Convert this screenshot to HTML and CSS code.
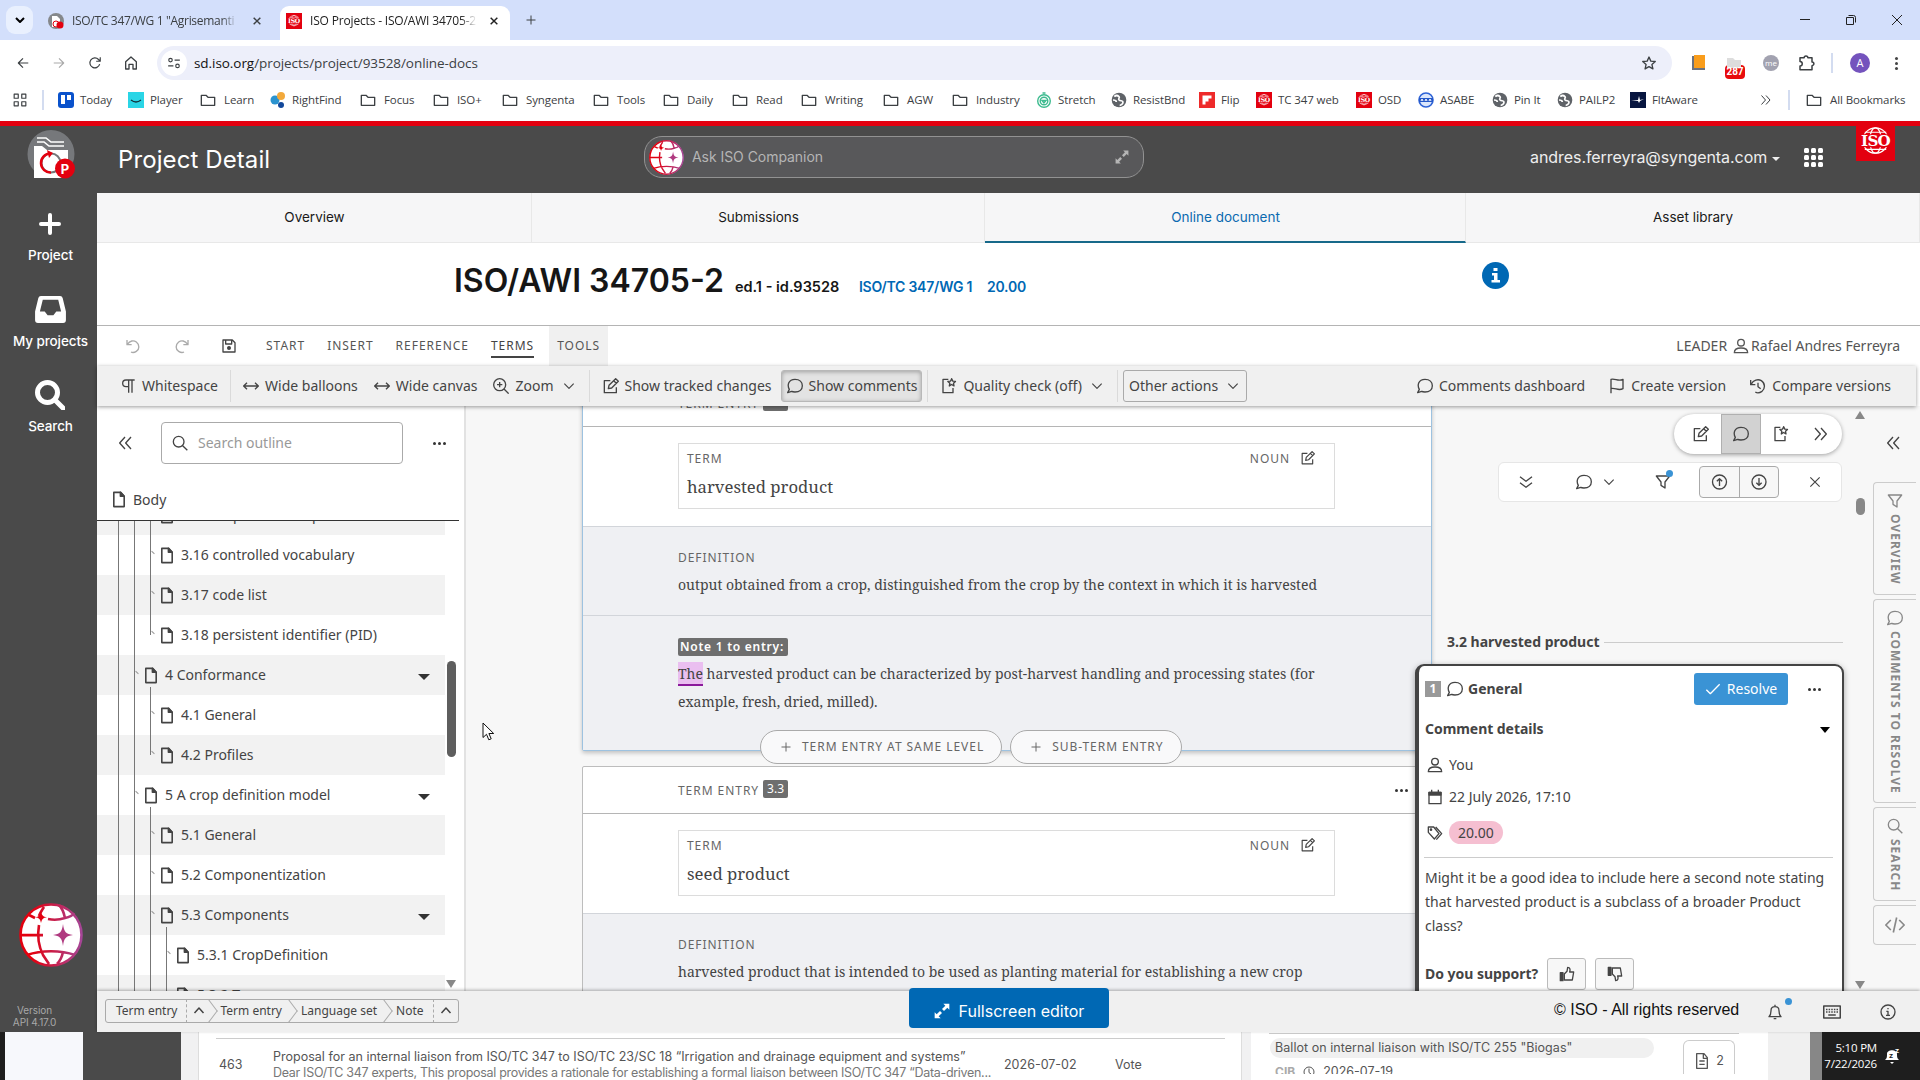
FILE: index.html
```html
<!DOCTYPE html>
<html lang="en">
<head>
  <meta charset="UTF-8" />
  <meta name="viewport" content="width=device-width, initial-scale=1.0"/>
  <title>ISO Projects - ISO/AWI 34705-2</title>
  <link rel="stylesheet" href="styles.css">
</head>
<body>

  <!-- Icon sprite -->
  <svg class="sprite" width="0" height="0">
    <defs>
      <linearGradient id="brand" x1="0" y1="0" x2="64" y2="0" gradientUnits="userSpaceOnUse">
        <stop offset="0.2" stop-color="#e3000f"/>
        <stop offset="1" stop-color="#a3479a"/>
      </linearGradient>
    </defs>
    <symbol id="i-down" viewBox="0 0 24 24"><path d="M4 8l8 8 8-8"/></symbol>
    <symbol id="i-up" viewBox="0 0 24 24"><path d="M3 16l9-10 9 10"/></symbol>
    <symbol id="i-x" viewBox="0 0 24 24"><path d="M4 4l16 16M20 4L4 20"/></symbol>
    <symbol id="i-plus" viewBox="0 0 24 24"><path d="M12 3v18M3 12h18"/></symbol>
    <symbol id="i-back" viewBox="0 0 24 24"><path d="M21 12H4M12 4l-8 8 8 8"/></symbol>
    <symbol id="i-forward" viewBox="0 0 24 24"><path d="M3 12h17M12 4l8 8-8 8"/></symbol>
    <symbol id="i-reload" viewBox="0 0 24 24"><path d="M20 14a8.500 8.500 0 1 1-2-8l3 3M21 2v7h-7"/></symbol>
    <symbol id="i-home" viewBox="0 0 24 24"><path d="M4 10l8-7 8 7v11h-5v-7H9v7H4z"/></symbol>
    <symbol id="i-tune" viewBox="0 0 24 24"><circle cx="6" cy="7" r="3"/><circle cx="18" cy="17" r="3"/><path d="M13 7h9M2 17h9"/></symbol>
    <symbol id="i-star" viewBox="0 0 24 24"><path d="M12 3l2.700 6.200 6.700.6-5 4.500 1.500 6.600L12 17.400 6.100 20.900l1.500-6.600-5-4.500 6.700-.6z"/></symbol>
    <symbol id="i-puzzle" viewBox="0 0 24 24"><path d="M4 5h5.500a2.500 2.500 0 0 1 5 0H20v5.500a2.500 2.500 0 0 1 0 5V21H4v-5a3 3 0 0 0 0-6z"/></symbol>
    <symbol id="i-folder" viewBox="0 0 24 24"><path d="M2 19V5h7l3 3h10v12H2z"/></symbol>
    <symbol id="i-apps" viewBox="0 0 24 24"><path d="M2 2h7v7H2zM15 2h7v7h-7zM2 15h7v7H2zM15 15h7v7h-7z"/></symbol>
    <symbol id="i-world" viewBox="0 0 24 24"><circle cx="12" cy="12" r="11" fill="#5f6368" stroke="none"/><path d="M5 7c3-3 5-2 7 0s-2 3 0 5 6 0 6 3-3 5-5 5M3 12c3 0 5 1 5 3" fill="none" stroke="#fff" stroke-width="2.500"/></symbol>
    <symbol id="i-iso" viewBox="0 0 40 40"><path d="M0 0h40v40H0z" fill="#e3000f" stroke="none"/><g fill="none" stroke="#fff" stroke-width="1.200"><circle cx="20" cy="19" r="13"/><ellipse cx="20" cy="19" rx="6" ry="13"/><path d="M9 10.500h22M9 28h22"/></g><path d="M3 12.500h34v13.500H3z" fill="#e3000f" stroke="none"/><text x="20" y="25" text-anchor="middle" class="iso-word">ISO</text></symbol>
    <symbol id="i-undo" viewBox="0 0 24 24"><path d="M3 3v7h7M4 9c3-5 9-6 13-3 5 4 5 11 0 14-3 2-6 2-8 1"/></symbol>
    <symbol id="i-redo" viewBox="0 0 24 24"><path d="M21 3v7h-7M20 9C17 4 11 3 7 6c-5 4-5 11 0 14 3 2 6 2 8 1"/></symbol>
    <symbol id="i-save" viewBox="0 0 24 24"><path d="M3 3h14l4 4v14H3zM7 3v6h9V3"/><circle cx="12" cy="15" r="2" fill="currentColor"/></symbol>
    <symbol id="i-user" viewBox="0 0 24 24"><circle cx="12" cy="7" r="5"/><path d="M2 22c0-5 3-7 10-7s10 2 10 7z"/></symbol>
    <symbol id="i-pilcrow" viewBox="0 0 24 24"><path d="M22 3H9a5 5 0 0 0 0 10h4M13 3v19M18 3v19"/></symbol>
    <symbol id="i-wide" viewBox="0 0 24 24"><path d="M1 12h22M6 7l-5 5 5 5M18 7l5 5-5 5"/></symbol>
    <symbol id="i-zoom" viewBox="0 0 24 24"><circle cx="10" cy="10" r="9"/><path d="M16.500 16.500l7 7M10 6v8M6 10h8"/></symbol>
    <symbol id="i-search" viewBox="0 0 24 24"><circle cx="10" cy="10" r="8"/><path d="M16 16l7 7"/></symbol>
    <symbol id="i-edit" viewBox="0 0 24 24"><path d="M11 4H2v18h18v-8M8 16l1-5 10-10 4 4-10 10zM16 4l4 4"/></symbol>
    <symbol id="i-comment" viewBox="0 0 24 24"><path d="M1 22l2.500-5C0 11 2 2 12 2c7 0 11 4 11 9.500S19 21 12 21c-2 0-4 0-5-1z"/></symbol>
    <symbol id="i-quality" viewBox="0 0 24 24"><path d="M11 2H3v20h15v-7M16 1l1.700 3.700 4 .4-3 2.700.8 4.100-3.500-2.200-3.500 2.200.8-4.100-3-2.700 4-.4z"/></symbol>
    <symbol id="i-flag" viewBox="0 0 24 24"><path d="M3 23V2c6-2 11 4 18 0v14c-7 4-12-2-18 0"/></symbol>
    <symbol id="i-history" viewBox="0 0 24 24"><path d="M1 3v7h7M2 9C5 3 12 1 17 4c6 4 6 12 1 16-3 2-7 3-10 1M12 7v6l4 3"/></symbol>
    <symbol id="i-left2" viewBox="0 0 24 24"><path d="M12 3l-8 9 8 9M21 3l-8 9 8 9"/></symbol>
    <symbol id="i-right2" viewBox="0 0 24 24"><path d="M3 3l8 9-8 9M12 3l8 9-8 9"/></symbol>
    <symbol id="i-down2" viewBox="0 0 24 24"><path d="M3 4l9 7 9-7M3 13l9 7 9-7"/></symbol>
    <symbol id="i-doc" viewBox="0 0 14 18"><path d="M1.500 1.500h7.500l3.500 4v11h-11z"/><path d="M8.500 1.500v4h4z" fill="currentColor"/></symbol>
    <symbol id="i-filter" viewBox="0 0 24 24"><path d="M2 3h20l-7 9v9l-6-4v-5z"/></symbol>
    <symbol id="i-cup" viewBox="0 0 24 24"><circle cx="12" cy="12" r="10.500"/><path d="M12 18V7M8 11l4-4 4 4"/></symbol>
    <symbol id="i-cdown" viewBox="0 0 24 24"><circle cx="12" cy="12" r="10.500"/><path d="M12 6v11M8 13l4 4 4-4"/></symbol>
    <symbol id="i-check" viewBox="0 0 24 24"><path d="M2 13l6 6L22 5"/></symbol>
    <symbol id="i-cal" viewBox="0 0 24 24"><path d="M3 5h18v17H3zM7 1v4M17 1v4"/><path d="M3 5h18v4H3z" fill="currentColor"/></symbol>
    <symbol id="i-tag" viewBox="0 0 24 24"><path d="M2 3h8l8 10-7 8-9-10zM13 3l9 10-8 9"/><circle cx="6" cy="7" r="1"/></symbol>
    <symbol id="i-thumb" viewBox="0 0 24 24"><path d="M2 10h4v12H2z" fill="currentColor"/><path d="M8 12l4-4 1-6c4 0 4 4 3 7h6l-2 12H8z"/></symbol>
    <symbol id="i-code" viewBox="0 0 24 24"><path d="M7 6l-6 6 6 6M17 6l6 6-6 6M14 3l-4 18"/></symbol>
    <symbol id="i-bell" viewBox="0 0 24 24"><path d="M3 19c3-3 3-5 3-9 0-8 12-8 12 0 0 4 0 6 3 9zM12 4V1M10 22h4"/></symbol>
    <symbol id="i-keys" viewBox="0 0 24 24"><path d="M1 4h22v16H1zM7 16h10"/><path d="M4 8.500h16M4 12h16" stroke-dasharray="2 1.500"/></symbol>
    <symbol id="i-info" viewBox="0 0 24 24"><circle cx="12" cy="12" r="10.500"/><path d="M9.500 11H12v6M9 17h6M12 6v2"/></symbol>
    <symbol id="i-expand" viewBox="0 0 24 24"><path d="M14 1h9v9l-3-3-5 5-3-3 5-5zM10 23H1v-9l3 3 5-5 3 3-5 5z" fill="currentColor" stroke="none"/></symbol>
    <symbol id="i-page" viewBox="0 0 24 24"><path d="M4 1h11l5 6v16H4zM8 12h8M8 17h8M14 1v7h6"/></symbol>
    <symbol id="i-clock" viewBox="0 0 24 24"><circle cx="12" cy="12" r="10"/><path d="M12 5v8l4 3"/></symbol>
    <symbol id="i-globe" viewBox="0 0 64 64">
      <circle cx="32" cy="32" r="31" fill="#fff"/>
      <g fill="none" stroke="url(#brand)" stroke-width="2.600">
        <circle cx="32" cy="32" r="30.500"/>
        <path d="M1 32.100h23M20 22c-2 12-1 20 4 30l6 9M25 4c-2 3-4 6-5 9M40 2c4 4 5 8 6 13-6 2-12 2-17 1M46 15c5-1 8-3 9-5M8 52c14-5 34-5 48 0M44 49c-1 5-3 9-6 12M10 12l6 3"/>
      </g>
      <path d="M44 21c1 8 3 10 10 11-7 1-9 3-10 11-1-8-3-10-10-11 7-1 9-3 10-11z" fill="#b03a80"/>
      <path d="M22 8c.7 4 2 6 6 6-4 1-5 2-6 6-.7-4-2-5-6-6 4 0 5-2 6-6z" fill="#e3000f"/>
    </symbol>
  </svg>

  <!-- Browser chrome -->
  <div class="tabstrip">
    <button class="tab-search"><svg class="ic w12 bold"><use href="#i-down"/></svg></button>
    <div class="btab">
      <svg class="fav" viewBox="0 0 16 16"><circle cx="8" cy="8" r="8" fill="#85888b"/><path d="M4 3h5l3 3v8H4z" fill="#fff"/><circle cx="12" cy="12" r="3.500" fill="#e3000f"/><circle cx="8" cy="11" r="3" fill="none" stroke="#e3000f"/></svg>
      <span class="btab-title">ISO/TC 347/WG 1 "Agrisemanti</span>
      <svg class="ic w10"><use href="#i-x"/></svg>
    </div>
    <div class="btab on">
      <svg class="fav"><use href="#i-iso"/></svg>
      <span class="btab-title">ISO Projects - ISO/AWI 34705-2</span>
      <svg class="ic w10"><use href="#i-x"/></svg>
    </div>
    <svg class="ic w12 newtab"><use href="#i-plus"/></svg>
    <div class="win-btns">
      <svg viewBox="0 0 12 12"><path d="M1 5.500h10"/></svg>
      <svg viewBox="0 0 12 12"><path d="M1.500 3.500h7v7h-7zM3.500 1.500h5q2 0 2 2v5"/></svg>
      <svg viewBox="0 0 12 12"><path d="M1 1l10 10M11 1L1 11"/></svg>
    </div>
  </div>

  <div class="navbar">
    <svg class="ic w14"><use href="#i-back"/></svg>
    <svg class="ic w14 faded"><use href="#i-forward"/></svg>
    <svg class="ic w14"><use href="#i-reload"/></svg>
    <svg class="ic w16"><use href="#i-home"/></svg>
    <div class="urlbar">
      <span class="tune"><svg class="ic w14"><use href="#i-tune"/></svg></span>
      <span class="url"><b>sd.iso.org</b>/projects/project/93528/online-docs</span>
      <svg class="ic w16"><use href="#i-star"/></svg>
    </div>
    <div class="exts">
      <svg class="w16" viewBox="0 0 16 16"><path d="M1 1h13v14H1z" fill="#6b7280"/><path d="M3 0h11v13H3z" fill="#f99d1c"/></svg>
      <span class="ext-count"><svg class="w16" viewBox="0 0 16 16"><path d="M1 1h6l2 2h6v8H1z" fill="#ddd"/></svg><span class="ext-badge">287</span></span>
      <span class="ext-me">me</span>
      <svg class="ic w18"><use href="#i-puzzle"/></svg>
      <i class="vline"></i>
      <span class="profile">A</span>
      <span class="kebab"></span>
    </div>
  </div>

  <div class="bookmarks">
    <svg class="ic w14"><use href="#i-apps"/></svg>
    <i class="vline"></i>
    <a><svg class="fav" viewBox="0 0 16 16"><rect width="16" height="16" rx="3" fill="#0a52cc"/><path d="M3 3h4v9H3zM9 3h4v5H9z" fill="#fff"/></svg>Today</a>
    <a><svg class="fav" viewBox="0 0 16 16"><path d="M0 0h16v16H0z" fill="#2ad5e6"/><path d="M3 8q5 4 10 0" fill="none" stroke="#10323c" stroke-width="1.300"/></svg>Player</a>
    <a><svg class="ic w16"><use href="#i-folder"/></svg>Learn</a>
    <a><svg class="fav" viewBox="0 0 16 16"><circle cx="5" cy="8" r="4.500" fill="#2a93cf"/><circle cx="11" cy="4" r="4" fill="#f2a93b"/><circle cx="11" cy="13" r="3" fill="#12489b"/></svg>RightFind</a>
    <a><svg class="ic w16"><use href="#i-folder"/></svg>Focus</a>
    <a><svg class="ic w16"><use href="#i-folder"/></svg>ISO+</a>
    <a><svg class="ic w16"><use href="#i-folder"/></svg>Syngenta</a>
    <a><svg class="ic w16"><use href="#i-folder"/></svg>Tools</a>
    <a><svg class="ic w16"><use href="#i-folder"/></svg>Daily</a>
    <a><svg class="ic w16"><use href="#i-folder"/></svg>Read</a>
    <a><svg class="ic w16"><use href="#i-folder"/></svg>Writing</a>
    <a><svg class="ic w16"><use href="#i-folder"/></svg>AGW</a>
    <a><svg class="ic w16"><use href="#i-folder"/></svg>Industry</a>
    <a><svg class="fav" viewBox="0 0 16 16" fill="none" stroke="#3dbb8f" stroke-width="1.400"><circle cx="8" cy="9" r="6.300"/><circle cx="8" cy="9" r="3.800"/><path d="M6.500 1h3M8 11L6 8.500h4z"/></svg>Stretch</a>
    <a><svg class="fav"><use href="#i-world"/></svg>ResistBnd</a>
    <a><svg class="fav" viewBox="0 0 16 16"><path d="M0 0h16v16H0z" fill="#ee2a2a"/><path d="M3.500 3.500h9v3h-3v3h-3v3h-3z" fill="#fff"/></svg>Flip</a>
    <a><svg class="fav"><use href="#i-iso"/></svg>TC 347 web</a>
    <a><svg class="fav"><use href="#i-iso"/></svg>OSD</a>
    <a><svg class="fav" viewBox="0 0 16 16"><circle cx="8" cy="8" r="7" fill="#dce7fb" stroke="#2e63d6" stroke-width="1.600"/><path d="M1 6h14v4H1z" fill="#2458c9"/><path d="M3 9l1-2 1 2M7 9l1-2 1 2M11 9l1-2 1 2" stroke="#fff" fill="none"/></svg>ASABE</a>
    <a><svg class="fav"><use href="#i-world"/></svg>Pin It</a>
    <a><svg class="fav"><use href="#i-world"/></svg>PAILP2</a>
    <a><svg class="fav" viewBox="0 0 16 16"><path d="M0 0h16v16H0z" fill="#07153f"/><path d="M1 9l7-1 1-4 1 4 4-1-4 2-1 2-1-2z" fill="#fff"/></svg>FltAware</a>
    <svg class="ic w12"><use href="#i-right2"/></svg>
    <i class="vline"></i>
    <a><svg class="ic w16"><use href="#i-folder"/></svg>All Bookmarks</a>
  </div>

  <!-- ISO projects application -->
  <div class="app">
    <div class="side">
      <svg class="logo" viewBox="0 0 48 49">
        <ellipse cx="24" cy="24" rx="23.500" ry="24" fill="#76787b"/>
        <path d="M10 8h9l5 4h13M10 12h7l5 4h15" fill="none" stroke="#fff" stroke-width="1.600"/>
        <path d="M7 16h8l5 4h21v28H7z" fill="#fff"/>
        <circle cx="24" cy="33" r="9.500" fill="none" stroke="#76787b" stroke-width="2"/>
        <path d="M24 42.500a9.500 9.500 0 0 1-1-19" fill="none" stroke="#e3000f" stroke-width="2.500"/>
        <path d="M20 20l6 3-4 5z" fill="#e3000f"/>
        <circle cx="38" cy="38.500" r="10" fill="#e3000f"/>
        <text x="38" y="43.500" text-anchor="middle" class="logo-p">P</text>
      </svg>
      <a class="side-item"><svg class="ic w24 heavy"><use href="#i-plus"/></svg>Project</a>
      <a class="side-item"><svg class="w32" viewBox="0 0 32 28"><path fill-rule="evenodd" d="M6 0h20q2 0 2.600 2L32 16v9q0 3-3 3H3q-3 0-3-3v-9L3.400 2Q4 0 6 0zM8 4L5 16h5l3 4h6l3-4h5L24 4z" fill="#fff"/></svg>My projects</a>
      <a class="side-item"><svg class="ic w30 heavy"><use href="#i-search"/></svg>Search</a>
      <svg class="companion"><use href="#i-globe"/></svg>
      <p class="version">Version<br>API 4.17.0</p>
    </div>

    <div class="main">
      <div class="topbar">
        <h1>Project Detail</h1>
        <div class="ask">
          <svg class="ask-globe"><use href="#i-globe"/></svg>
          <span>Ask ISO Companion</span>
          <svg class="w14"><use href="#i-expand"/></svg>
        </div>
        <span class="email">andres.ferreyra@syngenta.com<i class="caret"></i></span>
        <div class="waffle"><i></i><i></i><i></i><i></i><i></i><i></i><i></i><i></i><i></i></div>
        <svg class="iso-badge"><use href="#i-iso"/></svg>
      </div>

      <div class="page-tabs">
        <a>Overview</a>
        <a>Submissions</a>
        <a class="on">Online document</a>
        <a>Asset library</a>
      </div>

      <div class="title-row">
        <h2>ISO/AWI 34705-2</h2>
        <span class="edition">ed.1 - id.93528</span>
        <a class="wg">ISO/TC 347/WG 1</a>
        <a class="stage">20.00</a>
        <svg class="info-dot" viewBox="0 0 27 27"><circle cx="13.500" cy="13.500" r="13.500" fill="#0068b4"/><path d="M11.500 6h4v3h-4zM10 11h5.500v7H18v2.500H9.500V18H12v-4.500h-2z" fill="#fff"/></svg>
      </div>

      <div class="menu">
        <svg class="ic w16 faded"><use href="#i-undo"/></svg>
        <svg class="ic w16 faded"><use href="#i-redo"/></svg>
        <svg class="ic w16"><use href="#i-save"/></svg>
        <a class="first">START</a>
        <a>INSERT</a>
        <a>REFERENCE</a>
        <a><u>TERMS</u></a>
        <a class="on">TOOLS</a>
        <span class="who">LEADER <svg class="ic w16"><use href="#i-user"/></svg>Rafael Andres Ferreyra</span>
      </div>

      <div class="toolbar">
        <a><svg class="ic w16"><use href="#i-pilcrow"/></svg>Whitespace</a>
        <i class="sep"></i>
        <a><svg class="ic w16"><use href="#i-wide"/></svg>Wide balloons</a>
        <a><svg class="ic w16"><use href="#i-wide"/></svg>Wide canvas</a>
        <a><svg class="ic w16"><use href="#i-zoom"/></svg>Zoom<svg class="ic w14"><use href="#i-down"/></svg></a>
        <i class="sep"></i>
        <a><svg class="ic w16"><use href="#i-edit"/></svg>Show tracked changes</a>
        <a class="pressed"><svg class="ic w16"><use href="#i-comment"/></svg>Show comments</a>
        <i class="sep"></i>
        <a><svg class="ic w16"><use href="#i-quality"/></svg>Quality check (off)<svg class="ic w14"><use href="#i-down"/></svg></a>
        <i class="sep"></i>
        <a class="boxed">Other actions<svg class="ic w14"><use href="#i-down"/></svg></a>
        <div class="right">
          <a><svg class="ic w16"><use href="#i-comment"/></svg>Comments dashboard</a>
          <a><svg class="ic w16"><use href="#i-flag"/></svg>Create version</a>
          <a><svg class="ic w16"><use href="#i-history"/></svg>Compare versions</a>
        </div>
      </div>

      <div class="work">
        <!-- Outline -->
        <div class="outline">
          <div class="outline-head">
            <svg class="ic w16"><use href="#i-left2"/></svg>
            <div class="outline-search"><svg class="ic w16"><use href="#i-search"/></svg>Search outline</div>
            <span class="dots"></span>
          </div>
          <div class="outline-body"><svg class="ic doc"><use href="#i-doc"/></svg>Body</div>
          <div class="tree">
            <div class="rows">
              <div class="row"><i></i><i></i><i class="tick"></i><svg class="ic doc"><use href="#i-doc"/></svg>3.15 crop definition profile</div>
              <div class="row"><i></i><i></i><i class="tick"></i><svg class="ic doc"><use href="#i-doc"/></svg>3.16 controlled vocabulary</div>
              <div class="row"><i></i><i></i><i class="tick"></i><svg class="ic doc"><use href="#i-doc"/></svg>3.17 code list</div>
              <div class="row"><i></i><i></i><i class="tick last"></i><svg class="ic doc"><use href="#i-doc"/></svg>3.18 persistent identifier (PID)</div>
              <div class="row parent"><i></i><i class="tick"></i><svg class="ic doc"><use href="#i-doc"/></svg>4 Conformance<b></b></div>
              <div class="row"><i></i><i></i><i class="tick"></i><svg class="ic doc"><use href="#i-doc"/></svg>4.1 General</div>
              <div class="row"><i></i><i></i><i class="tick last"></i><svg class="ic doc"><use href="#i-doc"/></svg>4.2 Profiles</div>
              <div class="row parent"><i></i><i class="tick"></i><svg class="ic doc"><use href="#i-doc"/></svg>5 A crop definition model<b></b></div>
              <div class="row"><i></i><i></i><i class="tick"></i><svg class="ic doc"><use href="#i-doc"/></svg>5.1 General</div>
              <div class="row"><i></i><i></i><i class="tick"></i><svg class="ic doc"><use href="#i-doc"/></svg>5.2 Componentization</div>
              <div class="row parent deep"><i></i><i></i><i class="tick"></i><svg class="ic doc"><use href="#i-doc"/></svg>5.3 Components<b></b></div>
              <div class="row"><i></i><i></i><i></i><i class="tick"></i><svg class="ic doc"><use href="#i-doc"/></svg>5.3.1 CropDefinition</div>
              <div class="row"><i></i><i></i><i></i><i class="tick"></i><svg class="ic doc"><use href="#i-doc"/></svg>5.3.2 Taxon</div>
            </div>
            <div class="tree-scroll"><span class="thumb"></span><span class="arrow-down"></span></div>
          </div>
        </div>

        <!-- Document canvas -->
        <div class="canvas">
          <div class="entry active">
            <div class="entry-head">TERM ENTRY <span class="num">3.2</span></div>
            <div class="term-wrap">
              <div class="term-box">
                <div class="term-label">TERM<span>NOUN<svg class="ic w14"><use href="#i-edit"/></svg></span></div>
                <div class="term">harvested product</div>
              </div>
            </div>
            <div class="definition">
              <div class="label">DEFINITION</div>
              <p>output obtained from a crop, distinguished from the crop by the context in which it is harvested</p>
            </div>
            <div class="note">
              <span class="note-tag">Note 1 to entry:</span>
              <p><mark>The</mark> harvested product can be characterized by post-harvest handling and processing states (for<br>example, fresh, dried, milled).</p>
            </div>
            <div class="adders">
              <span><svg class="ic w12"><use href="#i-plus"/></svg>TERM ENTRY AT SAME LEVEL</span>
              <span><svg class="ic w12"><use href="#i-plus"/></svg>SUB-TERM ENTRY</span>
            </div>
          </div>
          <div class="entry">
            <div class="entry-head">TERM ENTRY <span class="num">3.3</span><span class="dots"></span></div>
            <div class="term-wrap">
              <div class="term-box">
                <div class="term-label">TERM<span>NOUN<svg class="ic w14"><use href="#i-edit"/></svg></span></div>
                <div class="term">seed product</div>
              </div>
            </div>
            <div class="definition">
              <div class="label">DEFINITION</div>
              <p>harvested product that is intended to be used as planting material for establishing a new crop</p>
            </div>
          </div>
        </div>

        <!-- Balloons -->
        <div class="balloons">
          <div class="mode-pill">
            <span><svg class="ic w16"><use href="#i-edit"/></svg></span>
            <span class="on"><svg class="ic w16"><use href="#i-comment"/></svg></span>
            <span><svg class="ic w16"><use href="#i-quality"/></svg></span>
            <span><svg class="ic w16"><use href="#i-right2"/></svg></span>
          </div>
          <div class="filter-bar">
            <svg class="ic w16"><use href="#i-down2"/></svg>
            <span class="pair"><svg class="ic w16"><use href="#i-comment"/></svg><svg class="ic w14"><use href="#i-down"/></svg></span>
            <span class="dotted-icon"><svg class="ic w16"><use href="#i-filter"/></svg></span>
            <span class="updown"><svg class="ic w16"><use href="#i-cup"/></svg><svg class="ic w16"><use href="#i-cdown"/></svg></span>
            <svg class="ic w14"><use href="#i-x"/></svg>
          </div>
          <div class="section-name">3.2 harvested product</div>
          <div class="comment">
            <div class="comment-head">
              <span class="count">1</span>
              <svg class="ic w16"><use href="#i-comment"/></svg>
              <strong>General</strong>
              <button class="resolve"><svg class="ic w16"><use href="#i-check"/></svg>Resolve</button>
              <span class="dots"></span>
            </div>
            <div class="details">Comment details<b></b></div>
            <div class="meta"><svg class="ic w16"><use href="#i-user"/></svg>You</div>
            <div class="meta"><svg class="ic w16"><use href="#i-cal"/></svg>22 July 2026, 17:10</div>
            <div class="meta tags"><svg class="ic w16"><use href="#i-tag"/></svg><span class="tag">20.00</span></div>
            <p class="comment-text">Might it be a good idea to include here a second note stating<br>that harvested product is a subclass of a broader Product<br>class?</p>
            <div class="support">Do you support?
              <span><svg class="ic w16"><use href="#i-thumb"/></svg></span>
              <span><svg class="ic w16 flip"><use href="#i-thumb"/></svg></span>
            </div>
          </div>
        </div>

        <div class="doc-scroll"><span class="arrow-up"></span><span class="thumb"></span><span class="arrow-down"></span></div>

        <!-- Right rail -->
        <div class="rail">
          <svg class="ic w16"><use href="#i-left2"/></svg>
          <div class="rail-tab overview"><svg class="ic w16"><use href="#i-filter"/></svg><span>OVERVIEW</span></div>
          <div class="rail-tab resolve-tab"><svg class="ic w16"><use href="#i-comment"/></svg><span>COMMENTS TO RESOLVE</span></div>
          <div class="rail-tab search-tab"><svg class="ic w16"><use href="#i-search"/></svg><span>SEARCH</span></div>
          <div class="rail-tab code-tab"><svg class="ic w20"><use href="#i-code"/></svg></div>
        </div>

        <svg class="cursor" viewBox="0 0 13 20"><path d="M1 1v14.500l3.500-3.200 2.300 5.500 2.400-1-2.300-5.300h4.800z" fill="#fff" stroke="#111"/></svg>
      </div>

      <div class="statusbar">
        <div class="crumbs">
          <span>Term entry</span><i class="dash"></i><svg class="ic w12 up"><use href="#i-up"/></svg><i class="chev"></i>
          <span>Term entry</span><i class="chev"></i>
          <span>Language set</span><i class="chev"></i>
          <span>Note</span><i class="dash"></i><svg class="ic w12 up"><use href="#i-up"/></svg>
        </div>
        <button class="fullscreen"><svg class="w16"><use href="#i-expand"/></svg>Fullscreen editor</button>
        <span class="rights">© ISO - All rights reserved</span>
        <span class="dotted-icon bell"><svg class="ic w16"><use href="#i-bell"/></svg></span>
        <svg class="ic w18"><use href="#i-keys"/></svg>
        <svg class="ic w16"><use href="#i-info"/></svg>
      </div>
    </div>
  </div>

  <!-- Window behind and taskbar clock -->
  <div class="behind">
    <div class="b-black"></div>
    <div class="b-thumb"></div>
    <div class="b-dark"></div>
    <div class="b-list">
      <span class="b-id">463</span>
      <div class="b-text">
        <div>Proposal for an internal liaison from ISO/TC 347 to ISO/TC 23/SC 18 “Irrigation and drainage equipment and systems”</div>
        <div class="sub">Dear ISO/TC 347 experts, This proposal provides a rationale for establishing a formal liaison between ISO/TC 347 “Data-driven...</div>
      </div>
      <span class="b-date">2026-07-02</span>
      <span>Vote</span>
    </div>
    <div class="b-ballots">
      <div class="b-ballot">
        <div class="b-name">Ballot on internal liaison with ISO/TC 255 "Biogas"</div>
        <div class="b-meta"><b>CIB</b><svg class="ic w12"><use href="#i-clock"/></svg>2026-07-19</div>
      </div>
      <div class="b-count"><svg class="ic w16"><use href="#i-page"/></svg>2</div>
    </div>
    <div class="b-track"></div>
    <div class="tray">
      <div>5:10 PM<br>7/22/2026</div>
      <svg class="w18" viewBox="0 0 18 18"><path d="M2 13c2-2 2-3 2-6 0-5 10-5 10 0 0 3 0 4 2 6zM7 15h4l-2 2z" fill="#fff"/><text x="6" y="11" class="zz">z</text><text x="12" y="6" class="zz light">z</text></svg>
    </div>
  </div>

</body>
</html>
```
FILE: styles.css
```css
* {
  margin: 0; padding: 0;
  box-sizing: border-box;
}

body {
  width: 1920px;
  height: 1080px;
  overflow: hidden;
  display: flex;
  flex-direction: column;
  background: #fff;
  color: #444;
  font: 14px/20px 'Noto Sans', sans-serif;
}

button { border: none; font: inherit; }
svg { display: block; flex: none; }
i, mark { font-style: normal; }

/* icons */
.sprite { position: absolute; }
.ic {
  fill: none;
  stroke: currentColor;
  stroke-width: 2;
  stroke-linejoin: round;
}
.w10 { width: 10px; height: 10px; }
.w12 { width: 12px; height: 12px; }
.w14 { width: 14px; height: 14px; }
.w16, .fav { width: 16px; height: 16px; }
.w18 { width: 18px; height: 18px; }
.w20 { width: 20px; height: 20px; }
.w24 { width: 24px; height: 24px; }
.w30 { width: 30px; height: 30px; }
.w32 { width: 31px; height: 27px; }
.w10 { stroke-width: 3.500; }
.bold { stroke-width: 4; }
.heavy { stroke-width: 4; stroke-linecap: round; }
.faded { color: #aaa; }
.flip { transform: rotate(180deg) scaleX(-1); }
.doc { width: 14px; height: 17px; stroke-width: 1.700; }
.iso-word { font: bold 15.500px 'DejaVu Serif', serif; fill: #fff; stroke: none; letter-spacing: -0.800px; }

.dots, .dots::before, .dots::after {
  width: 3px; height: 3px;
  border-radius: 50%;
  background: #333;
}
.dots { position: relative; flex: none; }
.dots::before, .dots::after { content: ''; position: absolute; left: -5px; }
.dots::after { left: 5px; }
.vline { width: 2px; height: 20px; background: #d3dcf0; }

/* browser chrome */
.tabstrip, .navbar, .bookmarks {
  font-family: 'Open Sans', sans-serif;
  color: #3c4043;
  display: flex;
  align-items: center;
}
.tabstrip { height: 40px; background: #d3dffb; }
.tab-search {
  width: 27px; height: 28px;
  margin-left: 6px;
  border-radius: 9px;
  background: #e9f0fe;
  display: grid;
  place-items: center;
}
.btab {
  width: 232px; height: 34px;
  margin: 6px 0 0;
  padding: 0 11px 5px 15px;
  display: flex;
  align-items: center;
  font-size: 12px;
  letter-spacing: -0.170px;
}
.btab:not(.on) { width: 248px; padding-right: 19px; }
.btab.on { width: 230px; background: #fff; border-radius: 9px 9px 0 0; margin-left: -1px; padding: 0 11px 5px 6px; color: #222; }
.btab-title {
  width: 167px;
  margin: 0 auto 0 8px;
  overflow: hidden;
  white-space: nowrap;
  mask-image: linear-gradient(to right, #000 90%, transparent);
}
.btab:not(.on) .btab-title { width: 166px; letter-spacing: -0.300px; }
.newtab { margin-left: 15px; }
.win-btns { margin-left: auto; display: flex; gap: 34px; padding-right: 17px; }
.win-btns svg { width: 12px; height: 12px; fill: none; stroke: #222; }

.navbar { height: 40px; padding-top: 6px; padding-left: 16px; }
.navbar > .ic { margin-right: 22px; }
.navbar > .w16 { margin-right: 18px; margin-left: -1px; }
.urlbar {
  width: 1515px; height: 34px;
  border-radius: 17px;
  background: #edeffa;
  display: flex;
  align-items: center;
  padding: 0 15px 0 4px;
}
.tune {
  width: 26px; height: 26px;
  border-radius: 50%;
  background: #fff;
  display: grid;
  place-items: center;
}
.url { flex: 1; margin-left: 7px; font-size: 13.500px; letter-spacing: -0.060px; }
.url b { font-weight: 400; color: #111; }
.exts { display: flex; align-items: center; margin-left: 19px; }
.ext-count { margin: 10px 13px 0 18px; width: 20px; }
.ext-count svg { margin-left: 1px; }
.ext-badge {
  display: block;
  margin-top: -8px;
  height: 14px;
  border-radius: 4px;
  background: #e80c0c;
  color: #fff;
  font: bold 10px/14px Roboto, sans-serif;
  text-align: center;
}
.ext-me {
  margin: 0 18px 0 5px;
  width: 16px; height: 16px;
  border-radius: 50%;
  background: #a2a2b0;
  color: #fff;
  font-size: 8px; line-height: 15px;
  text-align: center;
}
.exts .vline { margin: 0 16px; }
.profile {
  width: 20px; height: 20px;
  margin-left: 1px;
  border-radius: 50%;
  background: #7453bd;
  color: #fff;
  font-size: 11px;
  text-align: center;
}
.kebab {
  width: 3px; height: 3px;
  margin-left: 25px;
  border-radius: 50%;
  background: #444;
  box-shadow: 0 -5px #444, 0 5px #444;
}

.bookmarks {
  height: 41px;
  padding: 0 0 1px 13px;
  display: grid;
  grid-template-columns: 29px 16px 70px 72px 70px 90px 73px 69px 91px 70px 69px 69px 82px 69px 84px 75px 88px 57px 100px 62px 74px 65px 73px 130px 28px 18px 100px;
  font-size: 11.500px;
  letter-spacing: -0.100px;
}
.bookmarks a { display: flex; align-items: center; white-space: nowrap; }
.bookmarks a svg { margin-right: 6px; }
.bookmarks a .ic { margin-right: 8px; }

/* app shell */
.app { height: 911px; display: flex; border-top: 5px solid #e3000f; }
.side {
  width: 97px;
  background: #4a4a4a;
  color: #fff;
  font: 500 13.500px/18px Inter, sans-serif;
  letter-spacing: -0.100px;
  display: flex;
  flex-direction: column;
  align-items: center;
  padding: 4px 0 0 4px;
}
.logo { width: 48px; height: 49px; }
.logo-p { font: bold 13px Inter, sans-serif; fill: #fff; }
.side-item {
  height: 86px;
  display: flex;
  flex-direction: column;
  justify-content: flex-end;
  align-items: center;
  gap: 9px;
  padding-bottom: 1px;
}
.side-item .w24 { margin-bottom: 1px; }
.side-item .w30 { margin-bottom: -2px; }
.side-item + .side-item + .side-item { padding-bottom: 2px; }
.companion { width: 64px; height: 78px; margin-top: 459px; }
.version {
  width: 68px;
  margin: 30px 32px 0 0;
  font: 10px/12px Inter, sans-serif;
  color: #a8a8a8;
  text-align: center;
}

.main { width: 1823px; display: flex; flex-direction: column; }
.topbar {
  height: 67px;
  background: #4a4a4a;
  color: #fff;
  font: 16px/20px Inter, sans-serif;
  display: flex;
  align-items: center;
  padding-bottom: 5px;
}
h1 { font: 400 24px/30px Inter, sans-serif; letter-spacing: 0.100px; width: 525px; margin: 5px 0 0 21px; }
.ask {
  width: 500px; height: 42px;
  margin-left: 1px;
  border: 1px solid #929292;
  border-radius: 18px;
  background: #58585a;
  color: #b5b5b5;
  font-size: 14px;
  display: flex;
  align-items: center;
  padding: 0 14px 0 4px;
}
.ask span { flex: 1; margin-left: 8px; letter-spacing: -0.050px; }
.ask-globe { width: 35px; height: 35px; }
.email { margin-left: 386px; display: flex; align-items: center; color: #eee; letter-spacing: -0.060px; }
.caret { margin: 3px 0 0 5px; border: 4px solid transparent; border-top-color: #eee; border-bottom: 0; }
.waffle { margin-left: 24px; display: grid; grid-template-columns: repeat(3, 5px); gap: 2px; }
.waffle i { height: 5px; border-radius: 1.500px; background: #fff; }
.iso-badge { width: 39px; height: 39px; margin: -32px 0 0 33px; }

.page-tabs {
  height: 49px;
  display: grid;
  grid-template-columns: 435px 453px 481px 454px;
  font: 13.500px/48px Inter, sans-serif;
  color: #1a1a1a;
  text-align: center;
}
.page-tabs a { background: #f6f6f7; border-right: 1px solid #e8e8e8; border-bottom: 1px solid #e8e8e8; padding-left: 1px; }
.page-tabs .on { color: #0b6ab0; border-bottom: 2px solid #17698a; }

.title-row {
  height: 84px;
  border-bottom: 1px solid #b4b4b4;
  display: flex;
  align-items: baseline;
  padding: 20px 0 0 357px;
  color: #161616;
  font: 600 14px/20px Inter, sans-serif;
}
h2 { font: 600 32px/38px Inter, sans-serif; }
.edition { margin-left: 11px; width: 124px; font-size: 14.500px; }
.wg { color: #0068b4; width: 128px; letter-spacing: -0.230px; }
.stage { color: #0068b4; width: 495px; letter-spacing: -0.180px; }
.info-dot { width: 27px; height: 27px; align-self: flex-start; }

.menu {
  height: 40px;
  display: flex;
  align-items: center;
  padding-left: 28px;
  color: #555;
}
.menu > .ic { margin-right: 33px; }
.menu > .ic:nth-child(2) { margin-right: 31px; }
.menu > .ic:nth-child(3) { margin-right: 17px; color: #444; }
.menu a {
  height: 40px;
  margin-right: 6px;
  padding: 0 8px;
  font-size: 12px;
  line-height: 40px;
  letter-spacing: 0.980px;
}
.menu a.first { margin-left: 4px; }
.menu u { text-decoration: none; padding-bottom: 2px; border-bottom: 2px solid #444; color: #444; }
.menu .on { background: #f0f0f0; margin-left: 1px; }
.who { margin-left: auto; margin-right: 20px; display: flex; align-items: center; }
.who svg { margin: 0 2px 0 6px; }

.toolbar {
  height: 40px;
  width: 1819px;
  padding-left: 15px;
  background: #f0f0f0;
  display: flex;
  align-items: center;
  position: relative;
  z-index: 2;
  box-shadow: 0 1px 4px rgba(0, 0, 0, 0.4);
}
.toolbar a { display: flex; align-items: center; gap: 6px; padding: 0 8px; height: 32px; white-space: nowrap; }
.toolbar a .w14 { margin-left: 2px; }
.sep { width: 1px; height: 32px; margin: 0 5px; background: #dadada; }
a:first-child + .sep { margin: 0 4px; }
.toolbar .pressed {
  margin: 0 0 0 1px;
  padding: 0 4px 0 5px;
  border: 1px solid #b8b8b8;
  border-radius: 3px;
  background: #e3e3e3;
  box-shadow: inset 0 1px 4px rgba(0, 0, 0, 0.3);
}
.toolbar .boxed { padding: 0 6px 0 5px; border: 1px solid #aaa; border-radius: 3px; }
.toolbar .right { margin-left: auto; display: flex; gap: 8px; padding-right: 17px; }

.work { height: 585px; display: flex; position: relative; overflow: hidden; background: #f7f7f7; }

/* outline */
.outline { width: 369px; background: #fff; border-right: 2px solid #e2e2e2; }
.outline-head { height: 58px; padding: 16px 24px 0 20px; display: flex; align-items: center; }
.outline-search {
  flex: none;
  width: 242px; height: 42px;
  margin: 0 35px 0 28px;
  padding-left: 10px;
  border: 1px solid #aaa;
  border-radius: 4px;
  display: flex;
  align-items: center;
  gap: 10px;
  color: #999;
}
.outline-search .ic { color: #444; }
.outline-body { height: 57px; width: 362px; border-bottom: 1px solid #333; padding: 15px 0 0 15px; display: flex; align-items: center; gap: 7px; }
.tree { height: 470px; display: flex; overflow: hidden; }
.rows { width: 348px; margin-top: -26px; }
.row { height: 40px; padding-left: 21px; display: flex; align-items: center; position: relative; }
.row:nth-child(odd) { background: #f2f2f2; }
.row i { width: 16px; height: 40px; border-left: 1px solid #777; position: relative; }
.row .last { height: 20px; align-self: flex-start; }
.tick::after { content: ''; position: absolute; left: 0; top: 17px; width: 4px; height: 1px; background: #999; transform: rotate(45deg); }
.row .doc { margin: 0 7px 0 -6px; }
.row b, .details b { margin: 3px 15px 0 auto; border: 6px solid transparent; border-top-color: #333; border-bottom: 0; }
.parent::after { content: ''; position: absolute; left: 53px; bottom: 0; height: 8px; border-left: 1px solid #777; }
.deep::after { left: 69px; }
.tree-scroll { margin-left: 2px; position: relative; width: 10px; padding-top: 140px; }
.thumb { display: block; width: 9px; height: 96px; border-radius: 5px; background: #5e5e5e; }
.arrow-down, .arrow-up { position: absolute; border: 5px solid transparent; border-top: 8px solid #888; border-bottom: 0; bottom: 3px; left: -1px; }

/* document */
.canvas { width: 965px; padding-left: 116px; }
.entry {
  width: 850px;
  border: 1px solid #bdbdbd;
  background: #fff;
  margin-top: 15px;
  position: relative;
  border-radius: 2px;
}
.entry.active { margin-top: -27px; border-color: #9dc2e0; box-shadow: 0 2px 4px rgba(0, 0, 0, 0.22); }
.entry-head {
  height: 47px;
  padding: 1px 28px 0 95px;
  border-bottom: 1px solid #b5b5b5;
  display: flex;
  align-items: center;
}
.entry-head, .label, .term-label, .adders { font-size: 12px; line-height: 16px; letter-spacing: 0.950px; color: #666; }
.entry-head .dots { margin-left: auto; }
.num {
  margin: -3px 0 0 4px;
  padding: 0 4px;
  border-radius: 2px;
  background: #6e6e6e;
  color: #fff;
  font-size: 12px; line-height: 18px;
  letter-spacing: 0;
}
.term-wrap { padding: 16px 96px 17px 95px; }
.term-box { height: 66px; border: 1px solid #dcdcdc; padding: 7px 19px 0 8px; }
.term-label { display: flex; justify-content: space-between; }
.term-label span { display: flex; gap: 11px; color: #666; }
.term-label .ic { color: #444; }
.term { margin-top: 8px; font: 16.700px/24px 'Noto Serif', 'DejaVu Serif', serif; }
.definition, .note { padding: 22px 0 0 95px; border-top: 1px solid #d2d5da; background: #eff0f3; }
.definition { height: 89px; padding-top: 23px; }
.note { height: 135px; }
.entry p { font: 14px/28px 'Noto Serif', 'DejaVu Serif', serif; }
.definition p { margin-top: 5px; }
.note-tag {
  display: block;
  width: 110px; height: 18px;
  margin-bottom: 4px;
  padding-left: 2px;
  border-radius: 2px;
  background: #6e6e6e;
  color: #fff;
  font: 600 12px/18px 'Noto Sans', sans-serif;
  letter-spacing: 0.750px;
}
mark { background: #eabff0; color: inherit; padding: 2px 0 1px; border-bottom: 2px solid #8b1a9b; }
.adders { position: absolute; left: 177px; bottom: -14px; display: flex; gap: 8px; }
.adders span {
  height: 34px;
  padding: 0 17px 0 19px;
  border: 1px solid #aaa;
  border-radius: 17px;
  background: #f9f9fa;
  display: flex;
  align-items: center;
  gap: 10px;
}

/* balloons */
.balloons { width: 421px; padding: 8px 10px 0 0; position: relative; }
.mode-pill {
  width: 168px; height: 40px;
  margin-left: auto;
  padding-left: 7px;
  border-radius: 20px;
  background: #fff;
  box-shadow: 0 1px 4px rgba(0, 0, 0, 0.35);
  display: flex;
}
.mode-pill span { width: 40px; display: grid; place-items: center; }
.mode-pill .on { background: #d2d2d2; border: 1px solid #b0b0b0; }
.filter-bar {
  width: 344px; height: 40px;
  margin: 8px 0 0 auto;
  border: 1px solid #e6e6e6;
  border-radius: 6px;
  background: #fff;
  display: flex;
  align-items: center;
  padding: 0 22px 0 19px;
}
.pair { display: flex; align-items: center; gap: 10px; margin: 0 39px 0 42px; }
.dotted-icon { position: relative; }
.dotted-icon::after { content: ''; position: absolute; width: 7px; height: 7px; border-radius: 50%; background: #3a93d5; right: -2px; top: -4px; }
.updown { margin: 0 29px 0 28px; display: flex; border: 1px solid #aaa; border-radius: 4px; background: #f7f7f7; }
.updown svg { width: 39px; height: 30px; padding: 7px 11px; }
.updown svg + svg { border-left: 1px solid #aaa; }
.section-name {
  margin: 130px -1px 0 16px;
  font-weight: bold;
  display: flex;
  align-items: center;
  gap: 5px;
}
.section-name::after { content: ''; flex: 1; height: 1px; background: #ccc; }
.comment {
  width: 429px; height: 340px;
  margin: 12px 0 0 -16px;
  padding: 7px 8px 0 6px;
  border: 2px solid #444;
  border-left-width: 4px;
  border-radius: 9px;
  background: #fff;
  box-shadow: 0 2px 6px rgba(0, 0, 0, 0.35);
}
.comment-head { height: 32px; display: flex; align-items: center; padding-right: 18px; }
.count { width: 16px; height: 16px; background: #999; color: #fff; font: bold 12px/16px 'Noto Sans', sans-serif; text-align: center; margin-right: 6px; }
.comment-head strong { margin: 0 auto 0 5px; }
.resolve {
  width: 94px; height: 32px;
  margin-right: 25px;
  border-radius: 3px;
  background: #3a93d5;
  color: #fff;
  display: flex;
  align-items: center;
  justify-content: center;
  gap: 6px;
}
.details { display: flex; font-weight: bold; margin-top: 14px; letter-spacing: -0.050px; }
.details b { margin: 8px 4px 0 auto; border-width: 5px; border-top: 6px solid #000; }
.meta { height: 32px; display: flex; align-items: center; gap: 6px; padding-left: 2px; }
.details + .meta { margin-top: 10px; }
.tags { height: 39px; }
.tag { height: 23px; padding: 0 9px; border-radius: 12px; background: #f5bfd1; line-height: 23px; }
.comment-text { margin: 5px 1px 0 -1px; padding: 8px 0 0 1px; border-top: 1px solid #ccc; line-height: 24px; }
.support { margin-top: 20px; display: flex; align-items: center; gap: 9px; font-weight: bold; letter-spacing: -0.030px; }
.support span { width: 39px; height: 32px; border: 1px solid #bbb; border-radius: 3px; background: #f7f7f7; display: grid; place-items: center; }

.doc-scroll { width: 24px; position: relative; padding: 92px 0 0 4px; }
.doc-scroll .thumb { height: 17px; background: #888; }
.doc-scroll .arrow-down { left: 3px; bottom: 2px; }
.doc-scroll .arrow-up { left: 3px; top: 5px; transform: rotate(180deg); bottom: auto; }

.rail { width: 40px; padding-top: 29px; color: #888; }
.rail > .ic { margin: 0 0 31px 9px; color: #444; }
.rail-tab {
  width: 43px;
  margin: 0 0 4px -3px;
  border: 1px solid #ccc;
  border-right: 0;
  border-radius: 4px 0 0 4px;
  display: flex;
  flex-direction: column;
  align-items: center;
  padding-top: 10px;
}
.rail-tab span { writing-mode: vertical-rl; margin-top: 5px; font: bold 12px/18px 'Noto Sans', sans-serif; letter-spacing: 1px; }
.overview { height: 113px; }
.resolve-tab { height: 204px; }
.search-tab { height: 94px; }
.code-tab { height: 40px; padding-top: 9px; }
.cursor { position: absolute; left: 385px; top: 316px; width: 13px; height: 20px; }

/* status bar */
.statusbar {
  height: 41px;
  background: #f0f0f0;
  position: relative;
  box-shadow: 0 -1px 3px rgba(0, 0, 0, 0.3);
  display: flex;
  align-items: center;
}
.crumbs {
  flex: none;
  width: 354px; height: 24px;
  margin: -1px 450px 0 8px;
  border: 1px solid #aaa;
  border-radius: 3px;
  display: flex;
  align-items: center;
  font-size: 12px;
  overflow: hidden;
}
.crumbs span { margin: 0 9px 0 5px; }
.crumbs span:first-child { margin-left: 10px; margin-right: 8px; }
.dash { height: 24px; border-left: 1px dashed #aaa; }
.up { margin: 0 6px; stroke-width: 3; }
.chev { width: 16px; height: 16px; margin: 0 0 0 -11px; border: 1px solid #aaa; border-left: 0; border-bottom: 0; transform: rotate(45deg) skew(8deg, 8deg); }
.fullscreen {
  flex: none;
  width: 200px; height: 40px;
  margin-top: -7px;
  border-radius: 4px;
  background: #0068b4;
  color: #fff;
  font: 16px/20px Inter, sans-serif;
  display: flex;
  align-items: center;
  justify-content: center;
  gap: 9px;
  padding-top: 5px;
}
.rights { margin: -4px 28px 0 445px; font: 16px/20px 'Liberation Sans', sans-serif; color: #111; }
.bell { margin-right: 40px; }
.bell::after { right: -9px; top: -6px; }
.statusbar > .w18 { margin-right: 39px; }

/* strip of the window behind */
.behind { height: 48px; display: flex; background: #f1f1f2; font: 12.500px/16px Inter, sans-serif; color: #555; }
.b-black { width: 5px; background: #1e1e1e; }
.b-thumb { width: 78px; background: #f7f8fc; }
.b-dark { width: 98px; background: #4a4a4a; }
.b-list {
  width: 1044px;
  margin: 0 9px 0 17px;
  padding: 17px 0 0 20px;
  background: linear-gradient(#ccc, #ccc) 17px 6px / 1009px 1px no-repeat #fff;
  border-right: 1px solid #ddd;
  border-left: 1px solid #ddd;
  display: flex;
}
.b-id, .b-date, .b-date + span { padding-top: 8px; }
.b-id { width: 54px; }
.b-text { width: 731px; white-space: nowrap; letter-spacing: 0.015px; }
.sub { color: #777; letter-spacing: -0.310px; }
.b-date { width: 111px; }
.b-ballots {
  width: 517px;
  padding-left: 19px;
  background: linear-gradient(#ccc, #ccc) 18px 1px / 470px 1px no-repeat #fff;
  display: flex;
}
.b-ballot { width: 413px; height: 42px; padding-top: 6px; overflow: hidden; }
.b-name { width: 384px; height: 20px; padding-left: 5px; border-radius: 10px; background: #f0f0f0; line-height: 20px; letter-spacing: 0.050px; }
.b-meta { display: flex; gap: 8px; align-items: center; margin: 6px 0 0 5px; }
.b-meta b { color: #aaa; font-size: 12px; }
.b-count { width: 52px; height: 34px; margin-top: 8px; border: 1px solid #ccc; border-bottom: 0; border-radius: 6px 6px 0 0; display: flex; align-items: center; justify-content: center; gap: 6px; padding-top: 6px; }
.b-track { width: 54px; border-right: 12px solid #878787; background: #f0f0f0; }
.tray { width: 98px; background: #1e1e1e; color: #fff; font: 11.500px/16px 'Open Sans', sans-serif; display: flex; align-items: center; }
.tray div { width: 55px; text-align: right; letter-spacing: -0.200px; margin-right: 6px; }
.zz { font: bold 8px Roboto, sans-serif; fill: #1e1e1e; }
.zz.light { fill: #fff; }
```
